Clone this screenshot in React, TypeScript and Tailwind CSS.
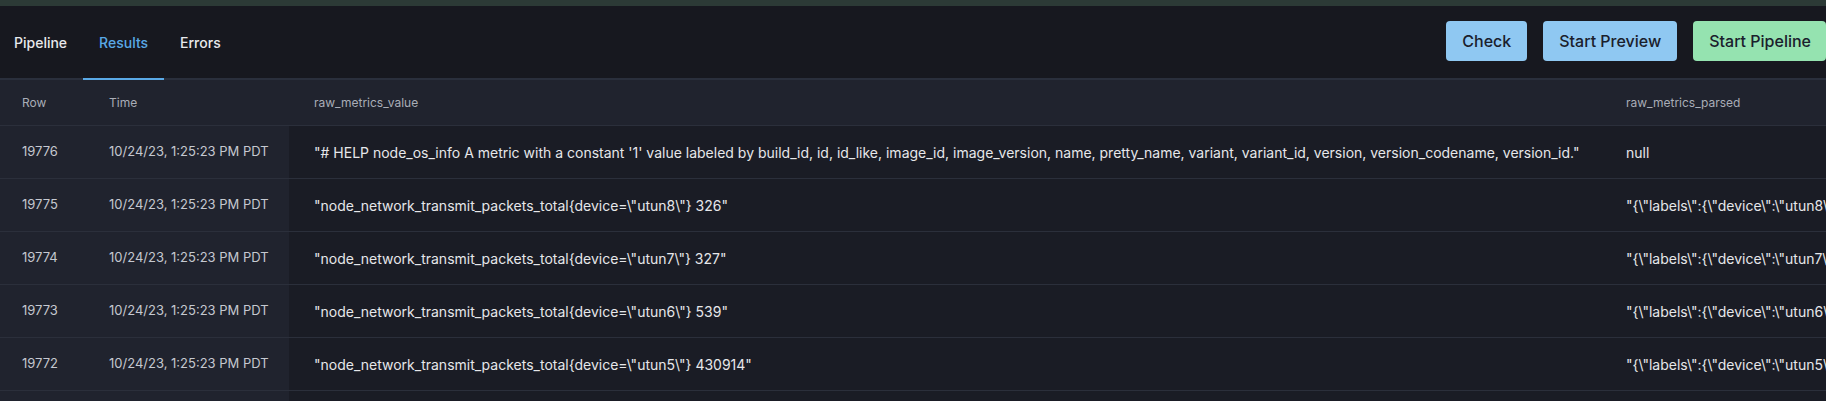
const rows = [
  {
    row: 19776,
    value:
      "\"# HELP node_os_info A metric with a constant '1' value labeled by build_id, id, id_like, image_id, image_version, name, pretty_name, variant, variant_id, version, version_codename, version_id.\"",
    parsed: "null",
  },
  {
    row: 19775,
    value: '"node_network_transmit_packets_total{device=\\"utun8\\"} 326"',
    parsed: '"{\\"labels\\":{\\"device\\":\\"utun8\\"},\\"name\\":\\"node_network_transmit_packets_total\\",\\"value\\":326}"',
  },
  {
    row: 19774,
    value: '"node_network_transmit_packets_total{device=\\"utun7\\"} 327"',
    parsed: '"{\\"labels\\":{\\"device\\":\\"utun7\\"},\\"name\\":\\"node_network_transmit_packets_total\\",\\"value\\":327}"',
  },
  {
    row: 19773,
    value: '"node_network_transmit_packets_total{device=\\"utun6\\"} 539"',
    parsed: '"{\\"labels\\":{\\"device\\":\\"utun6\\"},\\"name\\":\\"node_network_transmit_packets_total\\",\\"value\\":539}"',
  },
  {
    row: 19772,
    value: '"node_network_transmit_packets_total{device=\\"utun5\\"} 430914"',
    parsed: '"{\\"labels\\":{\\"device\\":\\"utun5\\"},\\"name\\":\\"node_network_transmit_packets_total\\",\\"value\\":430914}"',
  },
  {
    row: 19771,
    value: '"node_network_transmit_packets_total{device=\\"utun4\\"} 12"',
    parsed: '"{\\"labels\\":{\\"device\\":\\"utun4\\"},\\"name\\":\\"node_network_transmit_packets_total\\",\\"value\\":12}"',
  },
];

const TIME = "10/24/23, 1:25:23 PM PDT";
const COLS = "grid grid-cols-[87px_202px_1315px_900px]";

export default function App() {
  return (
    <div className="w-full h-[401px] overflow-hidden bg-[#1a1c25] font-['Inter','Liberation_Sans',sans-serif]">
      <div className="h-[6px] bg-[#2c3a36]" />

      <div className="flex items-stretch justify-between h-[74px] bg-[#17181f] border-b-2 border-[#2a2f3c]">
        <div className="flex items-stretch -mb-[2px]">
          <button className="pl-[14px] pr-4 text-[14px] font-medium text-[#e8e9ec] border-b-2 border-transparent">Pipeline</button>
          <button className="px-4 text-[14px] font-medium text-[#5aa9e6] border-b-2 border-[#5aa9e6]">Results</button>
          <button className="px-4 text-[14px] font-medium text-[#e8e9ec] border-b-2 border-transparent">Errors</button>
        </div>
        <div className="flex items-center gap-4 pb-[2px]">
          <button className="h-10 px-4 rounded-[4px] bg-[#8fc8f2] text-[#1a202c] text-[16px] font-medium">Check</button>
          <button className="h-10 px-4 rounded-[4px] bg-[#8fc8f2] text-[#1a202c] text-[16px] font-medium">Start Preview</button>
          <button className="h-10 pl-4 pr-[15px] rounded-[4px] bg-[#95e3b0] text-[#1a202c] text-[16px] font-medium">Start Pipeline</button>
        </div>
      </div>

      <div className="w-max">
        <div className={`${COLS} h-[46px] items-center bg-[#20232e] border-b border-[#2b2f3b] text-[12px] text-[#a9adb7]`}>
          <div className="pl-[22px]">Row</div>
          <div className="pl-[22px]">Time</div>
          <div className="pl-[25px]">raw_metrics_value</div>
          <div className="pl-[22px]">raw_metrics_parsed</div>
        </div>
        {rows.map((r) => (
          <div key={r.row} className={`${COLS} h-[53px] border-b border-[#2b2f3b]`}>
            <div className="flex items-center pl-[22px] bg-[#20232e] text-[13px] text-[#c5c8d0]">{r.row}</div>
            <div className="flex items-center pl-[22px] bg-[#20232e] text-[13px] text-[#c5c8d0]">{TIME}</div>
            <div className="flex items-center pl-[25px] text-[14px] text-[#e6e7ea] whitespace-nowrap">{r.value}</div>
            <div className="flex items-center pl-[22px] text-[14px] text-[#e6e7ea] whitespace-nowrap">{r.parsed}</div>
          </div>
        ))}
      </div>
    </div>
  );
}
